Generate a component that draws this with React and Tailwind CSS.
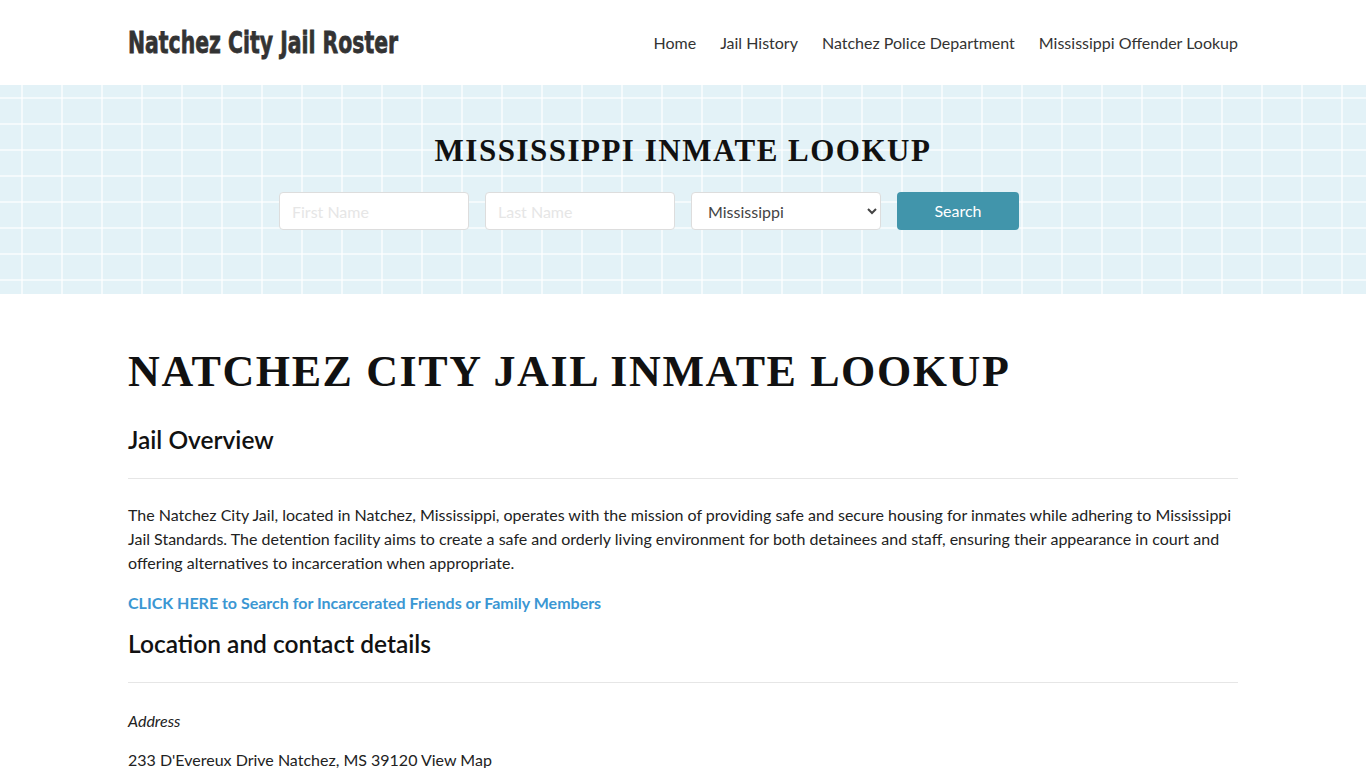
export default function App() {
  const links = ["Home", "Jail History", "Natchez Police Department", "Mississippi Offender Lookup"];

  return (
    <div className="min-h-screen bg-white text-[#222] font-['Lato','Noto_Sans',sans-serif]">
      {/* Header */}
      <header className="h-[85px]">
        <div className="mx-auto w-[1110px] h-full flex items-center justify-between">
          <a className="inline-block origin-left scale-x-[0.68] text-[30px] font-bold text-[#333] [-webkit-text-stroke:0.8px_#333] font-['DejaVu_Sans',sans-serif]">
            Natchez City Jail Roster
          </a>
          <nav className="flex items-center gap-6 text-[16px] text-[#333]">
            {links.map((l) => (
              <a key={l}>{l}</a>
            ))}
          </nav>
        </div>
      </header>

      {/* Search hero */}
      <section className="h-[209px] bg-[#e3f2f7] bg-[linear-gradient(to_right,rgba(255,255,255,0.6)_2px,transparent_2px),linear-gradient(to_bottom,rgba(255,255,255,0.6)_2px,transparent_2px)] bg-size-[40px_26px] bg-position-[21px_12px] flex flex-col items-center pt-[48px]">
        <h2 className="text-[31px] leading-[36px] font-bold tracking-[1.5px] text-[#111] font-['Liberation_Serif',serif]">
          MISSISSIPPI INMATE LOOKUP
        </h2>
        <form className="mt-[23px] mr-[68px] flex gap-4">
          <input
            placeholder="First Name"
            className="w-[190px] h-[38px] px-3 bg-white border border-[#ddd] rounded text-[16px] placeholder:text-[#e6e6e6]"
          />
          <input
            placeholder="Last Name"
            className="w-[190px] h-[38px] px-3 bg-white border border-[#ddd] rounded text-[16px] placeholder:text-[#e6e6e6]"
          />
          <select className="w-[190px] h-[38px] px-3 bg-white border border-[#ddd] rounded text-[16px] text-[#444]">
            <option>Mississippi</option>
          </select>
          <button type="button" className="w-[122px] h-[38px] bg-[#4195ab] text-white rounded text-[16px]">
            Search
          </button>
        </form>
      </section>

      {/* Main */}
      <main className="mx-auto w-[1110px] pt-[52px]">
        <h1 className="text-[44px] leading-[52px] font-bold tracking-[1.6px] text-[#111] font-['Liberation_Serif',serif]">
          NATCHEZ CITY JAIL INMATE LOOKUP
        </h1>
        <h3 className="mt-[27px] text-[24.5px] leading-[30px] font-semibold text-[#111]">Jail Overview</h3>
        <hr className="mt-[23px] border-[#e6e6e6]" />
        <p className="mt-[24px] text-[16px] leading-[24px] text-[#222]">
          The Natchez City Jail, located in Natchez, Mississippi, operates with the mission of providing safe and secure
          housing for inmates while adhering to Mississippi Jail Standards. The detention facility aims to create a safe and
          orderly living environment for both detainees and staff, ensuring their appearance in court and offering
          alternatives to incarceration when appropriate.
        </p>
        <a className="block mt-[16px] text-[16px] leading-[24px] font-bold text-[#3b97d3]">
          CLICK HERE to Search for Incarcerated Friends or Family Members
        </a>
        <h3 className="mt-[14px] text-[24.5px] leading-[30px] font-semibold text-[#111]">Location and contact details</h3>
        <hr className="mt-[23px] border-[#e6e6e6]" />
        <p className="mt-[26px] text-[16px] leading-[24px] italic text-[#222]">Address</p>
        <p className="mt-[15px] text-[16px] leading-[24px] text-[#222]">233 D'Evereux Drive Natchez, MS 39120 View Map</p>
      </main>
    </div>
  );
}
